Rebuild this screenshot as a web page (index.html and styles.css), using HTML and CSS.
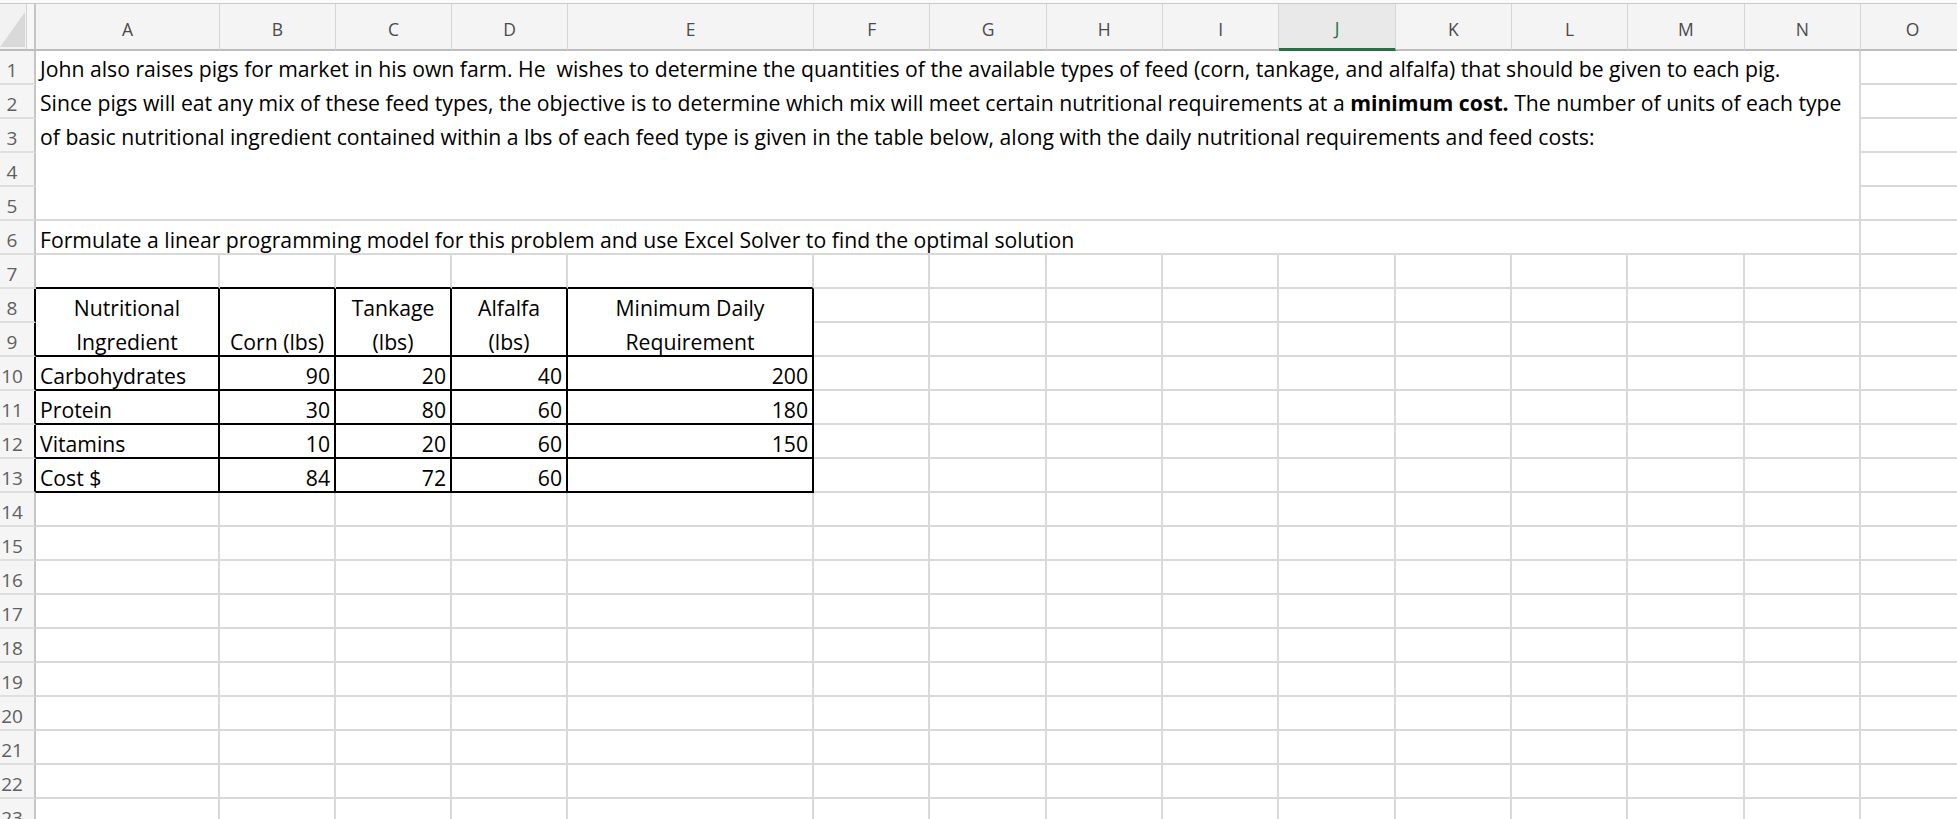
FILE: index.html
```html
<!DOCTYPE html>
<html lang="en">
<head>
<meta charset="utf-8">
<title>Sheet</title>
<link rel="stylesheet" href="styles.css">
</head>
<body>
<div class="topline"></div>
<div class="sheet">
  <div class="corner"><div class="corner-box"><svg width="26" height="45" viewBox="0 0 26 45"><polygon points="0,43 25,8 25,43" fill="#d9d9d9"/></svg></div></div>
  <div class="ch">A</div><div class="ch">B</div><div class="ch">C</div><div class="ch">D</div><div class="ch">E</div><div class="ch">F</div><div class="ch">G</div><div class="ch">H</div><div class="ch">I</div><div class="ch sel">J</div><div class="ch">K</div><div class="ch">L</div><div class="ch">M</div><div class="ch">N</div><div class="ch">O</div>

  <div class="rh">1</div>
  <div class="c intro">
    <div class="ln">John also raises pigs for market in his own farm. He&nbsp; wishes to determine the quantities of the available types of feed (corn, tankage, and alfalfa) that should be given to each pig.</div>
    <div class="ln">Since pigs will eat any mix of these feed types, the objective is to determine which mix will meet certain nutritional requirements at a <b>minimum cost.</b> The number of units of each type</div>
    <div class="ln">of basic nutritional ingredient contained within a lbs of each feed type is given in the table below, along with the daily nutritional requirements and feed costs:</div>
  </div>
  <div class="c"></div>
  <div class="rh">2</div><div class="c"></div>
  <div class="rh">3</div><div class="c"></div>
  <div class="rh">4</div><div class="c"></div>
  <div class="rh">5</div><div class="c"></div>

  <div class="rh">6</div>
  <div class="c wide">Formulate a linear programming model for this problem and use Excel Solver to find the optimal solution</div>
  <div class="c"></div>

  <div class="rh">7</div>
  <div class="c tt"></div><div class="c tt"></div><div class="c tt"></div><div class="c tt"></div><div class="c tt"></div>
  <div class="c"></div><div class="c"></div><div class="c"></div><div class="c"></div><div class="c"></div><div class="c"></div><div class="c"></div><div class="c"></div><div class="c"></div><div class="c"></div>

  <div class="rh tl">8</div>
  <div class="c t h2"><div class="ln">Nutritional</div><div class="ln">Ingredient</div></div>
  <div class="c t h2"><div class="ln">&nbsp;</div><div class="ln">Corn (lbs)</div></div>
  <div class="c t h2"><div class="ln">Tankage</div><div class="ln">(lbs)</div></div>
  <div class="c t h2"><div class="ln">Alfalfa</div><div class="ln">(lbs)</div></div>
  <div class="c t h2"><div class="ln">Minimum Daily</div><div class="ln">Requirement</div></div>
  <div class="c"></div><div class="c"></div><div class="c"></div><div class="c"></div><div class="c"></div><div class="c"></div><div class="c"></div><div class="c"></div><div class="c"></div><div class="c"></div>

  <div class="rh tl">9</div>
  <div class="c"></div><div class="c"></div><div class="c"></div><div class="c"></div><div class="c"></div><div class="c"></div><div class="c"></div><div class="c"></div><div class="c"></div><div class="c"></div>

  <div class="rh tl">10</div>
  <div class="c t">Carbohydrates</div><div class="c t num">90</div><div class="c t num">20</div><div class="c t num">40</div><div class="c t num">200</div>
  <div class="c"></div><div class="c"></div><div class="c"></div><div class="c"></div><div class="c"></div><div class="c"></div><div class="c"></div><div class="c"></div><div class="c"></div><div class="c"></div>

  <div class="rh tl">11</div>
  <div class="c t">Protein</div><div class="c t num">30</div><div class="c t num">80</div><div class="c t num">60</div><div class="c t num">180</div>
  <div class="c"></div><div class="c"></div><div class="c"></div><div class="c"></div><div class="c"></div><div class="c"></div><div class="c"></div><div class="c"></div><div class="c"></div><div class="c"></div>

  <div class="rh tl">12</div>
  <div class="c t">Vitamins</div><div class="c t num">10</div><div class="c t num">20</div><div class="c t num">60</div><div class="c t num">150</div>
  <div class="c"></div><div class="c"></div><div class="c"></div><div class="c"></div><div class="c"></div><div class="c"></div><div class="c"></div><div class="c"></div><div class="c"></div><div class="c"></div>

  <div class="rh tl">13</div>
  <div class="c t">Cost $</div><div class="c t num">84</div><div class="c t num">72</div><div class="c t num">60</div><div class="c t num"></div>
  <div class="c"></div><div class="c"></div><div class="c"></div><div class="c"></div><div class="c"></div><div class="c"></div><div class="c"></div><div class="c"></div><div class="c"></div><div class="c"></div>

  <div class="rh">14</div><div class="c"></div><div class="c"></div><div class="c"></div><div class="c"></div><div class="c"></div><div class="c"></div><div class="c"></div><div class="c"></div><div class="c"></div><div class="c"></div><div class="c"></div><div class="c"></div><div class="c"></div><div class="c"></div><div class="c"></div>
  <div class="rh">15</div><div class="c"></div><div class="c"></div><div class="c"></div><div class="c"></div><div class="c"></div><div class="c"></div><div class="c"></div><div class="c"></div><div class="c"></div><div class="c"></div><div class="c"></div><div class="c"></div><div class="c"></div><div class="c"></div><div class="c"></div>
  <div class="rh">16</div><div class="c"></div><div class="c"></div><div class="c"></div><div class="c"></div><div class="c"></div><div class="c"></div><div class="c"></div><div class="c"></div><div class="c"></div><div class="c"></div><div class="c"></div><div class="c"></div><div class="c"></div><div class="c"></div><div class="c"></div>
  <div class="rh">17</div><div class="c"></div><div class="c"></div><div class="c"></div><div class="c"></div><div class="c"></div><div class="c"></div><div class="c"></div><div class="c"></div><div class="c"></div><div class="c"></div><div class="c"></div><div class="c"></div><div class="c"></div><div class="c"></div><div class="c"></div>
  <div class="rh">18</div><div class="c"></div><div class="c"></div><div class="c"></div><div class="c"></div><div class="c"></div><div class="c"></div><div class="c"></div><div class="c"></div><div class="c"></div><div class="c"></div><div class="c"></div><div class="c"></div><div class="c"></div><div class="c"></div><div class="c"></div>
  <div class="rh">19</div><div class="c"></div><div class="c"></div><div class="c"></div><div class="c"></div><div class="c"></div><div class="c"></div><div class="c"></div><div class="c"></div><div class="c"></div><div class="c"></div><div class="c"></div><div class="c"></div><div class="c"></div><div class="c"></div><div class="c"></div>
  <div class="rh">20</div><div class="c"></div><div class="c"></div><div class="c"></div><div class="c"></div><div class="c"></div><div class="c"></div><div class="c"></div><div class="c"></div><div class="c"></div><div class="c"></div><div class="c"></div><div class="c"></div><div class="c"></div><div class="c"></div><div class="c"></div>
  <div class="rh">21</div><div class="c"></div><div class="c"></div><div class="c"></div><div class="c"></div><div class="c"></div><div class="c"></div><div class="c"></div><div class="c"></div><div class="c"></div><div class="c"></div><div class="c"></div><div class="c"></div><div class="c"></div><div class="c"></div><div class="c"></div>
  <div class="rh">22</div><div class="c"></div><div class="c"></div><div class="c"></div><div class="c"></div><div class="c"></div><div class="c"></div><div class="c"></div><div class="c"></div><div class="c"></div><div class="c"></div><div class="c"></div><div class="c"></div><div class="c"></div><div class="c"></div><div class="c"></div>
  <div class="rh">23</div><div class="c"></div><div class="c"></div><div class="c"></div><div class="c"></div><div class="c"></div><div class="c"></div><div class="c"></div><div class="c"></div><div class="c"></div><div class="c"></div><div class="c"></div><div class="c"></div><div class="c"></div><div class="c"></div><div class="c"></div>
</div>
</body>
</html>
```
FILE: styles.css
```css
html, body {
  margin: 0;
  padding: 0;
  background: #ffffff;
  overflow: hidden;
}
body {
  width: 1957px;
  height: 819px;
  font-family: "Open Sans", Lato, sans-serif;
  color: #000;
}
.topline {
  height: 3px;
  background: #fafafa;
  border-bottom: 1px solid #c9c9c9;
}
.sheet {
  display: grid;
  grid-template-columns: 36px 184px 116px 116px 116px 246px repeat(9, 116.33px) 104px;
  grid-template-rows: 47px;
  grid-auto-rows: 34px;
}
.corner {
  background: #f7f7f7;
  border-right: 2px solid #c6c6c6;
  border-bottom: 2px solid #bdbdbd;
  box-sizing: border-box;
  display: flex;
}
.corner-box {
  width: 26px;
  background: #f2f2f2;
  border-right: 1px solid #d4d4d4;
}
.corner-box svg {
  display: block;
}
.ch {
  background: #f4f4f4;
  border-right: 1px solid #d6d6d6;
  border-bottom: 2px solid #bdbdbd;
  box-sizing: border-box;
  display: flex;
  align-items: center;
  justify-content: center;
  padding-top: 4px;
  font-size: 17.5px;
  color: #4a4a4a;
}
.ch.sel {
  background: #e9e9e9;
  color: #217346;
  border-bottom: 3px solid #217346;
}
.rh {
  background: #f5f5f5;
  border-right: 2px solid #c6c6c6;
  border-bottom: 2px solid #dedede;
  box-sizing: border-box;
  font-size: 19px;
  line-height: 34px;
  padding: 2px 10px 0 0;
  text-align: center;
  color: #5f5f5f;
  overflow: hidden;
  white-space: nowrap;
}
.rh.tl {
  border-right-color: #000;
}
.c {
  border-right: 2px solid #d9d9d9;
  border-bottom: 2px solid #d9d9d9;
  box-sizing: border-box;
  min-width: 0;
  font-size: 21.2px;
  line-height: 34px;
  padding: 2px 4px 0 4px;
  white-space: nowrap;
}
.intro {
  grid-column: span 14;
  grid-row: span 5;
  padding-top: 1px;
}
.wide {
  grid-column: span 14;
}
.tt {
  border-bottom-color: #000;
}
.t {
  border-right-color: #000;
  border-bottom-color: #000;
}
.h2 {
  grid-row: span 2;
  text-align: center;
}
.num {
  text-align: right;
}
.ln {
  white-space: pre;
}
b {
  font-weight: 700;
}
```
